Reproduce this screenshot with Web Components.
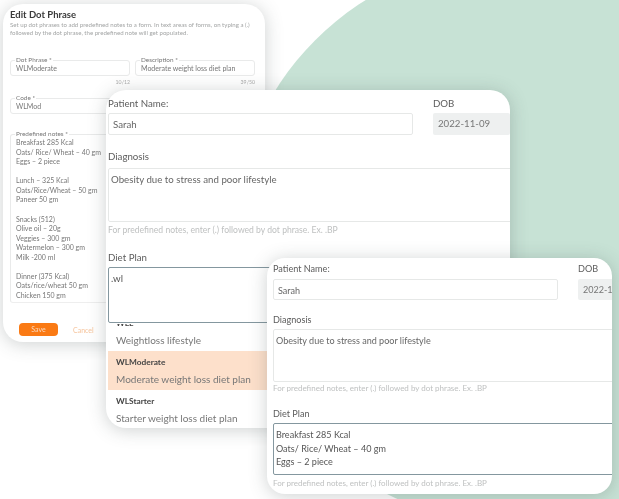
<!DOCTYPE html>
<html lang="en">
<head>
<meta charset="utf-8">
<title>Edit Dot Phrase</title>
<style>
  html, body { margin: 0; background: #fff; overflow: hidden; }
  body { font-family: Lato, "Open Sans", sans-serif; color: #555; }
  .dot-card { left: 3px; top: 4px; width: 262px; height: 338px; z-index: 1; --radius: 20px; }
  .big-card { left: 106px; top: 90px; width: 404px; height: 338px; z-index: 2; --radius: 20px;
    --fs: 9.7px; --label-fs: 9.7px; --hint-fs: 8.6px; --pad-x: 2px; --area-gap: 5px; --plan-gap: 3px; --hint-gap: 3px; }
  .small-card { left: 267px; top: 258px; width: 345px; height: 236px; z-index: 3; --radius: 18px;
    --fs: 9.05px; --label-fs: 9.1px; --hint-fs: 8px; --pad-x: 6px; --area-gap: 2px; --plan-gap: 2px; --hint-gap: 1px; }
  hint-line[slot=after] { --hint-gap: 3px; }
</style>
</head>
<body>

<app-stage>
  <window-card class="dot-card">
    <dot-phrase-form></dot-phrase-form>
  </window-card>

  <window-card class="big-card">
    <patient-form top="6" name-w="305" gap="20" input-h="22" area-h="54" plan-h="56"
      gap-a="14" gap-b="14" name="Sarah" dob="2022-11-09">
      <text-box slot="plan" focused>.wl</text-box>
      <suggest-list slot="after">
        <suggest-item code="WLL" text="Weightloss lifestyle"></suggest-item>
        <suggest-item code="WLModerate" text="Moderate weight loss diet plan" active></suggest-item>
        <suggest-item code="WLStarter" text="Starter weight loss diet plan"></suggest-item>
      </suggest-list>
    </patient-form>
  </window-card>

  <window-card class="small-card">
    <patient-form top="4" name-w="285" gap="20" input-h="21" area-h="53" plan-h="52"
      gap-a="13" gap-b="13" name="Sarah" dob="2022-11-09">
      <text-box slot="plan" focused>Breakfast 285 Kcal
Oats/ Rice/ Wheat – 40 gm
Eggs – 2 piece</text-box>
      <hint-line slot="after">For predefined notes, enter (.) followed by dot phrase. Ex. .BP</hint-line>
    </patient-form>
  </window-card>
</app-stage>

<script>
// page background: white with the big green circle behind the windows
const stageTpl = document.createElement('template');
stageTpl.innerHTML = `
  <style>
    :host { display: block; position: relative; width: 619px; height: 499px; overflow: hidden; filter: blur(.6px); }
    .blob { position: absolute; left: 232px; top: -43px; width: 568px; height: 568px; border-radius: 50%; background: #c7e2d5; }
  </style>
  <div class="blob"></div>
  <slot></slot>
`;
class AppStage extends HTMLElement {
  constructor() {
    super();
    this.attachShadow({mode: 'open'}).appendChild(stageTpl.content.cloneNode(true));
  }
}
customElements.define('app-stage', AppStage);

const cardTpl = document.createElement('template');
cardTpl.innerHTML = `
  <style>
    :host { display: block; position: absolute; box-sizing: border-box; background: #fff; overflow: hidden;
      border-radius: var(--radius); box-shadow: 0 2px 18px rgba(60,70,70,.25); }
  </style>
  <slot></slot>
`;
class WindowCard extends HTMLElement {
  constructor() {
    super();
    this.attachShadow({mode: 'open'}).appendChild(cardTpl.content.cloneNode(true));
  }
}
customElements.define('window-card', WindowCard);

const boxTpl = document.createElement('template');
boxTpl.innerHTML = `
  <style>
    :host { display: block; box-sizing: border-box; height: 100%; padding: 4px 2px; border: 1px solid #e6e8e7; border-radius: 2px;
      background: #fff; font-size: var(--fs); line-height: 13.5px; color: #666; overflow: hidden; }
    :host([focused]) { border: 1.5px solid #84979f; color: #555; position: relative; z-index: 2; }
    slot { display: block; white-space: pre-line; }
    :host([single]) slot { white-space: nowrap; }
  </style>
  <slot></slot>
`;
class TextBox extends HTMLElement {
  constructor() {
    super();
    this.attachShadow({mode: 'open'}).appendChild(boxTpl.content.cloneNode(true));
  }
}
customElements.define('text-box', TextBox);

const hintTpl = document.createElement('template');
hintTpl.innerHTML = `
  <style>
    :host { display: block; font-size: var(--hint-fs); line-height: 11px; color: #bfc1c1; margin-top: var(--hint-gap, 3px); white-space: nowrap; }
  </style>
  <slot></slot>
`;
class HintLine extends HTMLElement {
  constructor() {
    super();
    this.attachShadow({mode: 'open'}).appendChild(hintTpl.content.cloneNode(true));
  }
}
customElements.define('hint-line', HintLine);

const itemTpl = document.createElement('template');
itemTpl.innerHTML = `
  <style>
    :host { display: block; box-sizing: border-box; height: 39px; padding: 5px 8px 0; }
    :host([active]) { background: #fde0cb; }
    b { display: block; font-size: 8.3px; line-height: 12px; color: #444; }
    span { display: block; font-size: 10px; line-height: 14px; margin-top: 4px; color: #777; white-space: nowrap; }
  </style>
  <b></b><span></span>
`;
class SuggestItem extends HTMLElement {
  constructor() {
    super();
    this.attachShadow({mode: 'open'}).appendChild(itemTpl.content.cloneNode(true));
  }
  connectedCallback() {
    this.shadowRoot.querySelector('b').textContent = this.getAttribute('code');
    this.shadowRoot.querySelector('span').textContent = this.getAttribute('text');
  }
}
customElements.define('suggest-item', SuggestItem);

// the list is scrolled a little, so the first row is cut by the box above it
const listTpl = document.createElement('template');
listTpl.innerHTML = `
  <style>
    :host { display: block; height: 104px; overflow: hidden; margin-top: 1px; }
    div { margin-top: -12px; }
  </style>
  <div><slot></slot></div>
`;
class SuggestList extends HTMLElement {
  constructor() {
    super();
    this.attachShadow({mode: 'open'}).appendChild(listTpl.content.cloneNode(true));
  }
}
customElements.define('suggest-list', SuggestList);

// same form is shown twice at different sizes, so the sizes come in as attributes
const patientTpl = document.createElement('template');
patientTpl.innerHTML = `
  <style>
    :host { display: block; }
    .wrap { padding-left: var(--pad-x); }
    .row { display: grid; white-space: nowrap; }
    label { display: block; font-size: var(--label-fs); line-height: 14px; color: #5c5c5c; margin-bottom: 3px; }
    .diag label { margin-bottom: var(--area-gap); }
    .plan label { margin-bottom: var(--plan-gap); }
    .area, .plan-box { margin-right: -12px; }
    .name { padding-left: 4px; }
    .dob { padding-left: 5px; background: #eef0f0; border: 0; color: #777; }
  </style>
  <div class="wrap">
    <div class="row">
      <div>
        <label>Patient Name:</label>
        <div class="input"><text-box class="name" single></text-box></div>
      </div>
      <div>
        <label>DOB</label>
        <div class="input"><text-box class="dob" single></text-box></div>
      </div>
    </div>
    <div class="diag">
      <label>Diagnosis</label>
      <div class="area"><text-box>Obesity due to stress and poor lifestyle</text-box></div>
      <hint-line>For predefined notes, enter (.) followed by dot phrase. Ex. .BP</hint-line>
    </div>
    <div class="plan">
      <label>Diet Plan</label>
      <div class="plan-box"><slot name="plan"></slot></div>
      <slot name="after"></slot>
    </div>
  </div>
`;
class PatientForm extends HTMLElement {
  constructor() {
    super();
    this.attachShadow({mode: 'open'}).appendChild(patientTpl.content.cloneNode(true));
  }
  connectedCallback() {
    const root = this.shadowRoot;
    const get = name => this.getAttribute(name);
    root.querySelector('.wrap').style.paddingTop = get('top') + 'px';
    const row = root.querySelector('.row');
    row.style.gridTemplateColumns = get('name-w') + 'px 1fr';
    row.style.columnGap = get('gap') + 'px';
    root.querySelectorAll('.input').forEach(el => el.style.height = get('input-h') + 'px');
    root.querySelector('.area').style.height = get('area-h') + 'px';
    root.querySelector('.plan-box').style.height = get('plan-h') + 'px';
    root.querySelector('.diag').style.marginTop = get('gap-a') + 'px';
    root.querySelector('.plan').style.marginTop = get('gap-b') + 'px';
    root.querySelector('.name').textContent = get('name');
    root.querySelector('.dob').textContent = get('dob');
  }
}
customElements.define('patient-form', PatientForm);

const outlinedTpl = document.createElement('template');
outlinedTpl.innerHTML = `
  <style>
    :host { display: block; position: relative; box-sizing: border-box; border: 1px solid #e9eaea; border-radius: 3px;
      padding: 3px 5px; font-size: 7px; line-height: 9.56px; color: #777; }
    .legend { position: absolute; left: 4px; top: -5px; padding: 0 1px; background: #fff; font-size: 6.4px; line-height: 8px; color: #777; }
    slot { display: block; white-space: pre-line; }
  </style>
  <span class="legend"></span><slot></slot>
`;
class OutlinedField extends HTMLElement {
  constructor() {
    super();
    this.attachShadow({mode: 'open'}).appendChild(outlinedTpl.content.cloneNode(true));
  }
  connectedCallback() {
    this.shadowRoot.querySelector('.legend').textContent = this.getAttribute('label');
  }
}
customElements.define('outlined-field', OutlinedField);

const dotTpl = document.createElement('template');
dotTpl.innerHTML = `
  <style>
    :host { display: block; padding: 4px 7px 0; width: 262px; box-sizing: border-box; }
    h1 { margin: 0; font-size: 9.5px; line-height: 13px; font-weight: 700; color: #3a3a3a; }
    p { margin: 0; font-size: 6.1px; line-height: 8px; color: #a3a5a5; white-space: nowrap; }
    .grid { display: grid; grid-template-columns: 120px 120px; column-gap: 5px; margin-top: 23px; }
    .count { font-size: 5.2px; line-height: 7px; text-align: right; color: #aaa; padding-top: 3px; }
    .one { height: 16px; padding-top: 3px; }
    .wide { width: 245px; margin-top: 12px; }
    .notes { height: 169px; margin-top: 20px; padding-top: 3px; border-bottom-color: #eee; }
    .actions { display: flex; align-items: center; margin: 20px 0 0 9px; gap: 15px; }
    .save { width: 39px; height: 13px; background: #fa7a14; border-radius: 4px; color: #fbd9bf; font-size: 7px; line-height: 13px; text-align: center; }
    .cancel { color: #f6c49c; font-size: 7px; }
  </style>
  <h1>Edit Dot Phrase</h1>
  <p>Set up dot phrases to add predefined notes to a form. In text areas of forms, on typing a (.)<br>followed by the dot phrase, the predefined note will get populated.</p>
  <div class="grid">
    <div><outlined-field class="one" label="Dot Phrase *">WLModerate</outlined-field><div class="count">10/12</div></div>
    <div><outlined-field class="one" label="Description *">Moderate weight loss diet plan</outlined-field><div class="count">39/50</div></div>
  </div>
  <outlined-field class="one wide" label="Code *">WLMod</outlined-field>
  <outlined-field class="wide notes" label="Predefined notes *">Breakfast 285 Kcal
Oats/ Rice/ Wheat – 40 gm
Eggs – 2 piece

Lunch – 325 Kcal
Oats/Rice/Wheat – 50 gm
Paneer 50 gm

Snacks (512)
Olive oil – 20g
Veggies – 300 gm
Watermelon – 300 gm
Milk -200 ml

Dinner (375 Kcal)
Oats/rice/wheat 50 gm
Chicken 150 gm</outlined-field>
  <div class="actions"><div class="save">Save</div><div class="cancel">Cancel</div></div>
`;
class DotPhraseForm extends HTMLElement {
  constructor() {
    super();
    this.attachShadow({mode: 'open'}).appendChild(dotTpl.content.cloneNode(true));
  }
}
customElements.define('dot-phrase-form', DotPhraseForm);
</script>
</body>
</html>
